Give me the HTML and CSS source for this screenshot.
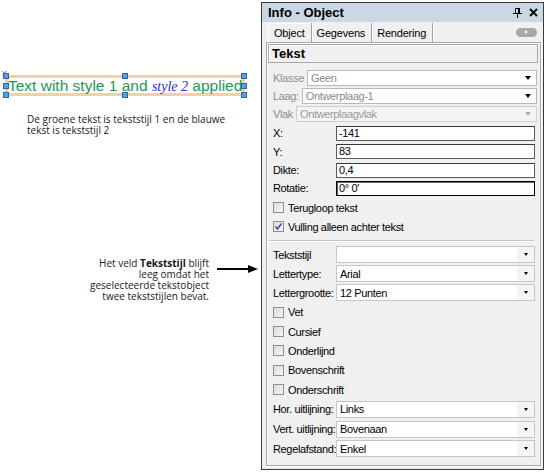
FILE: index.html
```html
<!DOCTYPE html>
<html>
<head>
<meta charset="utf-8">
<link rel="stylesheet" href="styles.css">
</head>
<body>
<div class="page">
  <div class="canvas">
    <div class="textbox">
      <span class="xmark">×</span>
      <span class="green">Text with style 1 and </span><span class="blue">style 2</span><span class="green"> applied</span>
      <span class="h h-tl"></span><span class="h h-tc"></span><span class="h h-tr"></span>
      <span class="h h-ml"></span><span class="h h-mr"></span>
      <span class="h h-bl"></span><span class="h h-bc"></span><span class="h h-br"></span>
    </div>
    <p class="desc">De groene tekst is tekststijl 1 en de blauwe<br>tekst is tekststijl 2</p>
    <div class="note">
      <p class="note-text">Het veld <b>Tekststijl</b> blijft<br>leeg omdat het<br>geselecteerde tekstobject<br>twee tekststijlen bevat.</p>
      <svg class="arrow" width="42" height="10" viewBox="0 0 42 10"><line x1="0" y1="5" x2="32" y2="5" stroke="#000" stroke-width="2"/><polygon points="31,1 41,5 31,9" fill="#000"/></svg>
    </div>
  </div>

  <div class="panel">
    <div class="titlebar">
      <span class="title">Info - Object</span>
      <span class="tb-icons">
        <svg width="9" height="10" viewBox="0 0 9 10"><path d="M2.5 0.5h4v5h-4z" fill="none" stroke="#000"/><rect x="5" y="0" width="2" height="6" fill="#000"/><rect x="0" y="5" width="9" height="1" fill="#000"/><rect x="4" y="6" width="1" height="4" fill="#000"/></svg>
        <svg width="9" height="9" viewBox="0 0 9 9"><path d="M1 1L8 8M8 1L1 8" stroke="#000" stroke-width="1.8"/></svg>
      </span>
    </div>
    <div class="tabs">
      <span class="tab active">Object</span>
      <span class="tab">Gegevens</span>
      <span class="tab">Rendering</span>
      <span class="pill"><span class="pill-tri"></span></span>
    </div>
    <div class="frame">
      <div class="heading">Tekst</div>

      <div class="row r18 tight"><span class="lbl dim">Klasse</span><div class="sel dimsel"><span class="val">Geen</span><span class="btn"><i class="tri big"></i></span></div></div>
      <div class="row r18 tight"><span class="lbl dim">Laag:</span><div class="sel dimsel"><span class="val">Ontwerplaag-1</span><span class="btn"><i class="tri big"></i></span></div></div>
      <div class="row r18 tight"><span class="lbl dim">Vlak</span><div class="sel disabled"><span class="val">Ontwerplaagvlak</span><span class="btn"><i class="tri big grey"></i></span></div></div>

      <div class="row r18 gap1"><span class="lbl fixed">X:</span><div class="inp">-141</div></div>
      <div class="row r19"><span class="lbl fixed">Y:</span><div class="inp">83</div></div>
      <div class="row r18"><span class="lbl fixed">Dikte:</span><div class="inp">0,4</div></div>
      <div class="row r18"><span class="lbl fixed">Rotatie:</span><div class="inp focus">0° 0'</div></div>

      <div class="row r19 gap1 chk"><span class="cb"></span><span class="lbl">Terugloop tekst</span></div>
      <div class="row r19 chk"><span class="cb"><svg width="9" height="9" viewBox="0 0 9 9"><path d="M1.5 4.5L3.5 7L7.5 1.5" fill="none" stroke="#3d5689" stroke-width="1.6"/></svg></span><span class="lbl">Vulling alleen achter tekst</span></div>

      <div class="sep"></div>

      <div class="row r19"><span class="lbl fixed">Tekststijl</span><div class="sel low"><span class="val"></span><span class="btn"><i class="tri"></i></span></div></div>
      <div class="row r19"><span class="lbl fixed">Lettertype:</span><div class="sel low"><span class="val">Arial</span><span class="btn"><i class="tri"></i></span></div></div>
      <div class="row r19"><span class="lbl fixed">Lettergrootte:</span><div class="sel low"><span class="val">12 Punten</span><span class="btn"><i class="tri"></i></span></div></div>

      <div class="row r20 chk"><span class="cb"></span><span class="lbl">Vet</span></div>
      <div class="row r19 chk"><span class="cb"></span><span class="lbl">Cursief</span></div>
      <div class="row r19 chk"><span class="cb"></span><span class="lbl">Onderlijnd</span></div>
      <div class="row r20 chk"><span class="cb"></span><span class="lbl">Bovenschrift</span></div>
      <div class="row r19 chk"><span class="cb"></span><span class="lbl">Onderschrift</span></div>

      <div class="row r20"><span class="lbl fixed">Hor. uitlijning:</span><div class="sel low"><span class="val">Links</span><span class="btn"><i class="tri"></i></span></div></div>
      <div class="row r20"><span class="lbl fixed">Vert. uitlijning:</span><div class="sel low"><span class="val">Bovenaan</span><span class="btn"><i class="tri"></i></span></div></div>
      <div class="row r19"><span class="lbl fixed">Regelafstand:</span><div class="sel low"><span class="val">Enkel</span><span class="btn"><i class="tri"></i></span></div></div>
    </div>
  </div>
</div>
</body>
</html>
```

FILE: styles.css
```css
html, body {
  margin: 0;
  padding: 0;
  background: #fff;
}
body {
  font-family: "Liberation Sans", Arial, sans-serif;
  color: #000;
}
.page {
  display: flex;
  align-items: flex-start;
  width: 546px;
  height: 475px;
  overflow: hidden;
}

/* ---------- left canvas ---------- */
.canvas {
  width: 261px;
  flex: none;
}
.textbox {
  position: relative;
  margin: 75px 0 0 5px;
  width: 240px;
  height: 21px;
  box-sizing: border-box;
  border: 3px solid #f9cea4;
  white-space: nowrap;
  font-size: 15.5px;
  line-height: 15px;
}
.green {
  color: #1f9557;
}
.blue {
  color: #2c2ce0;
  font-family: "Liberation Serif", "Times New Roman", serif;
  font-style: italic;
  font-size: 14px;
}
.xmark {
  position: absolute;
  left: -7px;
  top: -10px;
  font-size: 11px;
  line-height: 11px;
  color: #8a8a8a;
}
.h {
  position: absolute;
  width: 6px;
  height: 6px;
  box-sizing: border-box;
  background: #5d9de0;
  border: 1px solid #2f66a8;
}
.h-tl { left: -5px; top: -5px; }
.h-tc { left: 50%; top: -5px; margin-left: -3px; }
.h-tr { right: -5px; top: -5px; }
.h-ml { left: -5px; top: 50%; margin-top: -3px; }
.h-mr { right: -5px; top: 50%; margin-top: -3px; }
.h-bl { left: -5px; bottom: -5px; }
.h-bc { left: 50%; bottom: -5px; margin-left: -3px; }
.h-br { right: -5px; bottom: -5px; }

.desc {
  margin: 18px 0 0 27px;
  font-family: "Open Sans", "Noto Sans", sans-serif;
  font-size: 10px;
  line-height: 11px;
  color: #1a1a1a;
}
.note {
  display: flex;
  align-items: flex-start;
  margin-top: 122px;
}
.note-text {
  margin: 0;
  width: 209px;
  text-align: right;
  font-family: "Open Sans", "Noto Sans", sans-serif;
  font-size: 10px;
  line-height: 11px;
  color: #1a1a1a;
}
.note-text b {
  font-weight: 700;
}
.arrow {
  margin: 6px 0 0 8px;
  flex: none;
}

/* ---------- panel ---------- */
.panel {
  width: 283px;
  height: 468px;
  margin-top: 2px;
  box-sizing: border-box;
  border: 1px solid #3a3a3a;
  background: #f0f0f0;
  display: flex;
  flex-direction: column;
  flex: none;
}
.titlebar {
  height: 19px;
  background: #cad7e4;
  display: flex;
  align-items: center;
  justify-content: space-between;
  padding: 0 5px 0 6px;
}
.title {
  font-weight: 700;
  font-size: 13px;
}
.tb-icons {
  display: flex;
  align-items: center;
  gap: 7px;
}
.tb-icons svg {
  display: block;
}
.tabs {
  height: 20px;
  display: flex;
  align-items: stretch;
  padding: 0 6px 0 6px;
  font-size: 11px;
  letter-spacing: -0.2px;
}
.tab {
  display: flex;
  align-items: center;
  padding: 1px 6px 0 5px;
  margin-top: 1px;
  border-right: 1px solid #a0a0a0;
  box-shadow: 1px 0 0 #fff;
}
.tab.active {
  border-left: 1px solid #fff;
  box-shadow: 1px 0 0 #fff, inset 0 1px 0 #fff;
}
.pill {
  margin-left: auto;
  align-self: center;
  width: 21px;
  height: 9px;
  border-radius: 5px;
  background: #a8a8a8;
  display: flex;
  align-items: center;
  justify-content: center;
}
.pill-tri {
  width: 0;
  height: 0;
  border-left: 3px solid #fff;
  border-top: 2.5px solid transparent;
  border-bottom: 2.5px solid transparent;
}
.frame {
  flex: 1;
  margin: 0 2px 3px 4px;
  border: 1px solid #a9a9a9;
  box-shadow: inset 1px 1px 0 #fff, 1px 1px 0 #fff;
  padding: 0 2px 0 0;
  display: flex;
  flex-direction: column;
  font-size: 11px;
  letter-spacing: -0.35px;
}
.heading {
  margin: 1px 0 6px 1px;
  height: 19px;
  box-sizing: border-box;
  border: 1px solid #a9a9a9;
  box-shadow: inset 1px 1px 0 #fff;
  font-weight: 700;
  font-size: 13px;
  letter-spacing: 0;
  padding-left: 3px;
  display: flex;
  align-items: center;
}
.row {
  display: flex;
  align-items: center;
  padding: 0 3px 0 6px;
  flex: none;
}
.r18 { height: 18px; }
.r19 { height: 19px; }
.r20 { height: 20px; }
.gap1 { margin-top: 1px; }
.tight {
  gap: 3px;
  padding-right: 1px;
}
.lbl {
  white-space: nowrap;
}
.lbl.fixed {
  width: 63px;
  flex: none;
}
.dim {
  color: #8d8d8d;
}
.inp {
  flex: 1;
  height: 15px;
  box-sizing: border-box;
  background: #fff;
  border: 1px solid #5a5a5a;
  border-top-color: #3a3a3a;
  padding-left: 2px;
  line-height: 13px;
}
.inp.focus {
  border-color: #000;
  box-shadow: inset 1px 1px 0 #6a6a6a;
}
.sel {
  flex: 1;
  height: 17px;
  box-sizing: border-box;
  background: #fff;
  border: 1px solid #c6c6c6;
  display: flex;
  align-items: center;
}
.sel .val {
  flex: 1;
  padding-left: 3px;
}
.sel .btn {
  width: 17px;
  align-self: stretch;
  background: #f4f4f4;
  display: flex;
  align-items: center;
  justify-content: center;
}
.dimsel {
  height: 16px;
  border-color: #b9b9b9;
  color: #8a8a8a;
}
.dimsel .btn {
  background: #fff;
}
.sel.disabled {
  height: 16px;
  background: #f4f4f4;
  border-color: #cfcfcf;
  color: #999;
}
.tri {
  display: block;
  width: 0;
  height: 0;
  border-top: 3px solid #000;
  border-left: 2.5px solid transparent;
  border-right: 2.5px solid transparent;
}
.tri.big {
  border-top-width: 4px;
  border-left-width: 3.5px;
  border-right-width: 3.5px;
}
.tri.grey {
  border-top-color: #b0b0b0;
}
.chk {
  gap: 4px;
}
.cb {
  width: 11px;
  height: 11px;
  box-sizing: border-box;
  border: 1px solid #8e8f8f;
  background: linear-gradient(135deg, #dcdcdc, #f6f6f6);
  display: flex;
  align-items: center;
  justify-content: center;
  flex: none;
}
.cb svg {
  display: block;
}
.sep {
  margin: 4px 4px 4px 2px;
  height: 1px;
  background: #c4c4c4;
  box-shadow: 0 1px 0 #fff;
  flex: none;
}
```
